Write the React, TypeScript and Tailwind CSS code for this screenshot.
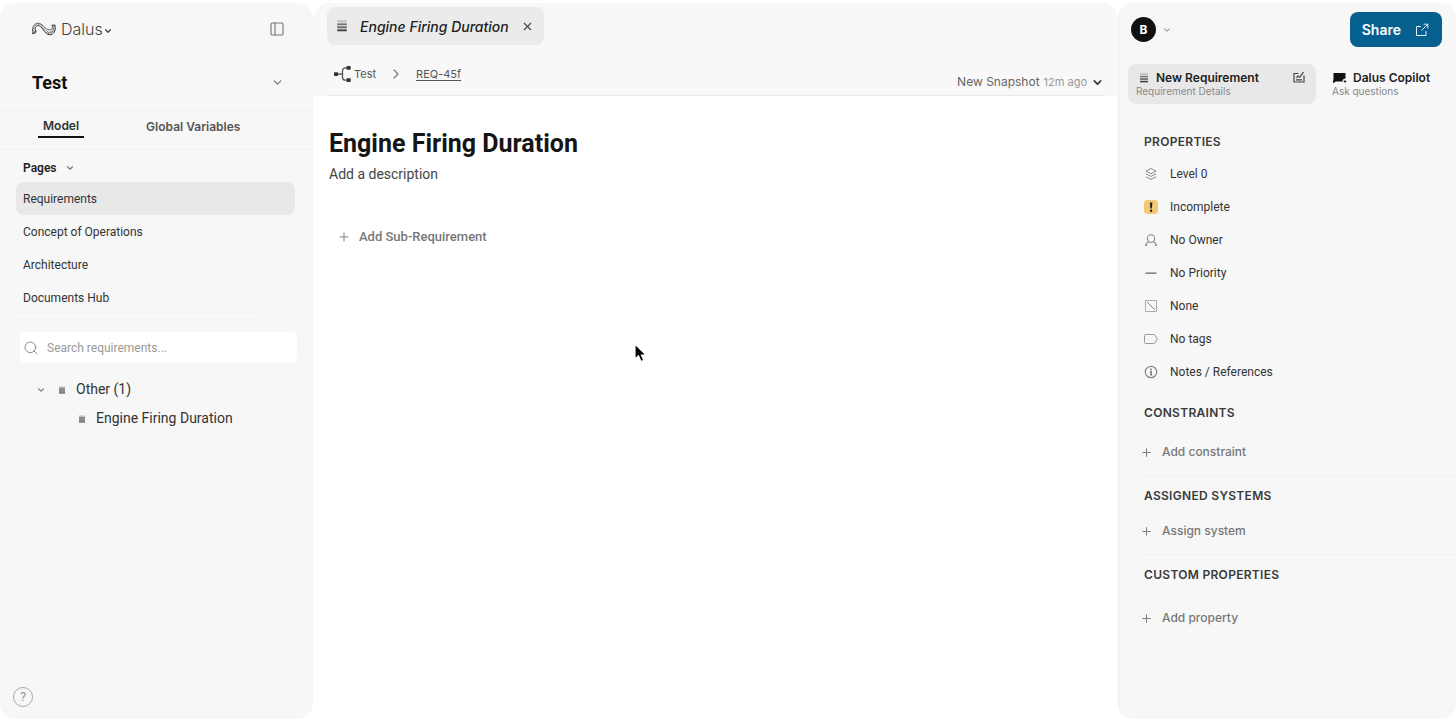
import type { ReactNode } from "react";
import {
  ChevronDown,
  ChevronRight,
  PanelLeft,
  Plus,
  Search,
  X,
} from "lucide-react";

const PAGES = ["Requirements", "Concept of Operations", "Architecture", "Documents Hub"];

function DalusMark() {
  return (
    <svg viewBox="0 0 26 14" className="h-[14px] w-[26px]" fill="none" stroke="#333" strokeLinecap="round">
      <path d="M1.800 11.200C.4 6.500 2.800 1.200 7 1.200c4.700 0 6.800 6.500 11.500 6.700 2.600 .1 3.500-2.300 2.800-4.700" strokeWidth=".8" />
      <path d="M4.800 9.400c-1.400-2.600-.4-5.400 2.400-5.800 3.800-.4 5.600 8.300 11 9.100 4.600 .5 7.200-4.400 5.600-9.500" strokeWidth="1" />
      <path d="M1.800 11.400c1.800 .2 2.800-.6 3-2.200" strokeWidth="1.200" />
      <path d="M3.200 10.200C1.600 6.400 3.200 2.600 7 2.400c4.200-.2 6 7.300 11.300 7.900 3.200 .2 5.200-3 4.300-7.300" strokeWidth="1.600" strokeDasharray=".6 1.100" strokeLinecap="butt" stroke="#555" />
      <path d="M15.500 10.800c3 1.400 6.600-.6 7.700-4.600" strokeWidth="1.800" strokeDasharray=".8 .8" strokeLinecap="butt" stroke="#666" />
      <path d="M21.300 3.200l2.500 0" strokeWidth=".9" />
    </svg>
  );
}

function BarsIcon({ className }: { className: string }) {
  return (
    <svg viewBox="0 0 10 10" className={className} aria-hidden="true">
      <path d="M1 .3h8v1.600H1z" fill="#bbb" />
      <path d="M1 2.800h8v1.600H1z" fill="#777" />
      <path d="M1 5.300h8v1.600H1z" fill="#666" />
      <path d="M1 7.800h8v1.600H1z" fill="#444" />
    </svg>
  );
}

function BlockIcon() {
  return (
    <svg viewBox="0 0 8 8" className="size-2" aria-hidden="true">
      <path d="M1 .5h6v1.500H1z" fill="#bdbdbd" />
      <path d="M1 2h6v5.500H1z" fill="#8c8c8c" />
      <path d="M1 6.500h6v1H1z" fill="#777" />
    </svg>
  );
}

function TreeIcon() {
  return (
    <svg viewBox="0 0 18 18" className="size-[18px]" fill="none" aria-hidden="true">
      <path d="M3 9h5.500M13 2.800h-1.500a3 3 0 0 0-3 3v6.400a3 3 0 0 0 3 3H13" stroke="#555" strokeWidth="1.300" />
      <rect x="0" y="7.200" width="4" height="3.800" rx=".8" fill="#333" />
      <rect x="12.500" y="1" width="4.200" height="3.800" rx=".8" fill="#333" />
      <rect x="12.500" y="13.200" width="4.200" height="3.800" rx=".8" fill="#333" />
    </svg>
  );
}

function ShareIcon() {
  return (
    <svg viewBox="0 0 14 14" className="size-[14px]" fill="none" stroke="#e6f0f5" strokeWidth="1" aria-hidden="true">
      <path d="M6 3.500H1.500v9h9.500V8M8.500 1.200h4.300v4.300M12.500 1.500L6.500 7.500" />
    </svg>
  );
}

function EditIcon() {
  return (
    <svg viewBox="0 0 12 12" className="size-3" fill="none" stroke="#444" strokeWidth="1.200" aria-hidden="true">
      <path d="M5.500 2.500H1V11h10V4.500M3 8.800h6" />
      <path d="M3.500 7l1.200-2 2 1.200L10.500 1.200" />
    </svg>
  );
}

function CopilotIcon() {
  return (
    <svg viewBox="0 0 15 12" className="h-3 w-[15px]" fill="#111" aria-hidden="true">
      <path d="M1.500 1h12v5.500a3 3 0 0 0-3 3H4L.8 11.200 1.500 7z" />
      <path d="M13 7.500c.2 1.200.7 1.700 1.900 1.900-1.200.2-1.700.7-1.900 1.900-.2-1.200-.7-1.700-1.900-1.900 1.200-.2 1.700-.7 1.900-1.900z" />
    </svg>
  );
}

function LevelIcon() {
  return (
    <svg viewBox="0 0 14 14" className="size-[14px]" fill="none" stroke="#888" strokeWidth="1" strokeLinejoin="round" aria-hidden="true">
      <path d="M7 1.500l5 2.600-5 2.600-5-2.600zM2 6.800l5 2.600 5-2.600M2 9.800l5 2.600 5-2.600" />
    </svg>
  );
}

function OwnerIcon() {
  return (
    <svg viewBox="0 0 14 14" className="size-[14px]" fill="none" stroke="#888" strokeWidth="1.100" aria-hidden="true">
      <circle cx="7" cy="5.500" r="3.700" />
      <path d="M1.500 12.400c.6-1.800 1.700-3 3.300-3.700M12.500 12.400c-.6-1.800-1.700-3-3.300-3.700M1 12.400h2M11 12.400h2" />
    </svg>
  );
}

function WarningIcon() {
  return (
    <svg viewBox="0 0 14 14" className="size-[14px]" aria-hidden="true">
      <rect width="14" height="14" rx="3.500" fill="#f3ca72" />
      <path d="M5.800 2.500h2.600L7.800 8.500H6.400z" fill="#222" />
      <circle cx="7.100" cy="10.700" r="1.200" fill="#222" />
    </svg>
  );
}

function PriorityIcon() {
  return (
    <svg viewBox="0 0 14 14" className="size-[14px]" aria-hidden="true">
      <path d="M1.500 6.500h11v1.300h-11z" fill="#666" />
    </svg>
  );
}

function NoneIcon() {
  return (
    <svg viewBox="0 0 14 14" className="size-[14px]" fill="none" stroke="#aaa" strokeWidth="1" aria-hidden="true">
      <path d="M1.500 1.500h11v11h-11z" />
      <path d="M3 3l8 8" stroke="#888" />
    </svg>
  );
}

function TagIcon() {
  return (
    <svg viewBox="0 0 14 14" className="size-[14px]" fill="none" stroke="#999" strokeWidth="1" strokeLinejoin="round" aria-hidden="true">
      <path d="M1.500 2.500h8.200c.6 0 1 .2 1.300.6L13.300 7 11 10.900c-.3.4-.7.6-1.300.6H1.500c-.5 0-1-.4-1-1v-7c0-.6.500-1 1-1z" />
    </svg>
  );
}

function NotesIcon() {
  return (
    <svg viewBox="0 0 14 14" className="size-[14px]" fill="none" stroke="#888" strokeWidth="1.200" aria-hidden="true">
      <circle cx="7" cy="7" r="5.700" />
      <path d="M6 6.300h1v3.500h1.200M7 3.500v1.400" stroke="#666" strokeWidth="1.300" />
    </svg>
  );
}

const PROPERTIES: { label: string; icon: ReactNode }[] = [
  { label: "Level 0", icon: <LevelIcon /> },
  { label: "Incomplete", icon: <WarningIcon /> },
  { label: "No Owner", icon: <OwnerIcon /> },
  { label: "No Priority", icon: <PriorityIcon /> },
  { label: "None", icon: <NoneIcon /> },
  { label: "No tags", icon: <TagIcon /> },
  { label: "Notes / References", icon: <NotesIcon /> },
];

function SectionTitle({ children }: { children: ReactNode }) {
  return (
    <h2 className="pl-[25px] font-[Inter,sans-serif] text-[12px] leading-4 font-semibold tracking-wide text-[#3a3a3a]">
      {children}
    </h2>
  );
}

function AddButton({ children }: { children: ReactNode }) {
  return (
    <button className="ml-[21px] flex h-5 items-center gap-[9px] font-[Inter,sans-serif] text-[12px] font-medium text-[#777]">
      <Plus size={13} strokeWidth={1.8} />
      {children}
    </button>
  );
}

function Sidebar() {
  return (
    <aside className="flex w-[313px] shrink-0 flex-col rounded-2xl bg-[#f7f7f7]">
      <div className="flex h-[52px] items-center justify-between pr-[28px] pl-[31px]">
        <button className="flex items-center gap-1 font-[Inter,sans-serif] text-[16px] font-light text-[#444]">
          <DalusMark />
          <span className="flex items-center">
            Dalus
            <ChevronDown size={10} strokeWidth={3} className="mt-1" />
          </span>
        </button>
        <button aria-label="Toggle sidebar">
          <PanelLeft size={16} strokeWidth={1.7} color="#777" />
        </button>
      </div>
      <button className="flex h-[55px] items-center justify-between pr-[29px] pl-8 text-[18px] font-bold text-[#111]">
        Test
        <ChevronDown size={13} strokeWidth={2.2} color="#777" />
      </button>
      <nav className="flex h-[40px] items-start border-y border-[#f1f1f1] pt-[7px] font-[Inter,sans-serif] text-[12px] font-semibold">
        <a href="#model" className="ml-[38px] border-b-2 border-[#111] px-[5px] pb-[2px] leading-4 text-[#333]">
          Model
        </a>
        <a href="#variables" className="ml-[62px] leading-[18px] text-[#555]">
          Global Variables
        </a>
      </nav>
      <button className="mt-2 flex h-5 items-center gap-2 pl-[23px] text-[12px] font-semibold text-[#222]">
        Pages
        <ChevronDown size={10} strokeWidth={2.6} color="#777" />
      </button>
      <ul className="mt-1 mr-[18px] ml-4 text-[12px] text-[#333]">
        {PAGES.map((page, i) => (
          <li key={page}>
            <a
              href="#page"
              className={`flex h-[33px] items-center rounded-lg pl-[7px] ${i === 0 ? "bg-[#e8e8e8]" : ""}`}
            >
              {page}
            </a>
          </li>
        ))}
      </ul>
      <div className="mt-px mr-14 ml-3 h-px bg-white" />
      <label className="mt-4 mr-4 ml-5 flex h-[31px] items-center gap-2 rounded-md bg-white pl-[3px]">
        <Search size={16} strokeWidth={1.5} color="#888" />
        <input
          type="text"
          aria-label="Search requirements"
          placeholder="Search requirements..."
          className="min-w-0 flex-1 bg-transparent text-[12px] outline-none placeholder:text-[#999]"
        />
      </label>
      <div className="mt-3 text-[14px] text-[#333]">
        <button className="flex h-[29px] items-center pl-9">
          <ChevronDown size={10} strokeWidth={2.8} color="#888" />
          <span className="mr-[10px] ml-3">
            <BlockIcon />
          </span>
          Other (1)
        </button>
        <button className="flex h-[29px] items-center gap-[10px] pl-[78px]">
          <BlockIcon />
          Engine Firing Duration
        </button>
      </div>
      <button
        aria-label="Help"
        className="mt-auto mb-3 ml-[13px] flex size-5 items-center justify-center rounded-full border border-[#aaa] text-[13px] text-[#999]"
      >
        ?
      </button>
    </aside>
  );
}

function Editor() {
  return (
    <main className="flex min-w-0 flex-1 flex-col">
      <header className="flex h-[93px] flex-col rounded-t-2xl bg-[#f8f8f8] px-[14px]">
        <div className="mt-1 flex h-[38px] items-center self-start rounded-lg bg-[#ebebeb] pr-[10px] pl-[9px]">
          <BarsIcon className="size-3" />
          <span className="mr-3 ml-3 font-[Inter,sans-serif] text-[14px] font-medium text-[#222] italic">
            Engine Firing Duration
          </span>
          <button aria-label="Close tab">
            <X size={13} strokeWidth={2} color="#444" />
          </button>
        </div>
        <div className="flex flex-1 items-start justify-between border-b border-[#e9e9e9]">
          <nav className="mt-5 ml-[7px] flex h-[18px] items-center font-[Inter,sans-serif] text-[11px] text-[#555]">
            <TreeIcon />
            <a href="#test" className="mr-3 ml-[2px]">
              Test
            </a>
            <ChevronRight size={16} strokeWidth={1.8} color="#777" />
            <a href="#req" className="ml-3 underline underline-offset-2">
              REQ-45f
            </a>
          </nav>
          <button className="mt-[27px] flex h-5 items-center gap-1 font-[Inter,sans-serif] text-[12px] text-[#666]">
            New Snapshot
            <span className="text-[11px] text-[#999]">12m ago</span>
            <ChevronDown size={13} strokeWidth={3} color="#333" />
          </button>
        </div>
      </header>
      <section className="px-4 pt-8">
        <h1 className="text-[25px] leading-8 font-bold text-[#151515]">Engine Firing Duration</h1>
        <p className="mt-1 text-[14px] leading-5 text-[#444]">Add a description</p>
        <button className="mt-[43px] ml-2 flex h-5 items-center gap-2 text-[13px] font-medium text-[#777]">
          <Plus size={14} strokeWidth={1.6} />
          Add Sub-Requirement
        </button>
      </section>
    </main>
  );
}

function Details() {
  return (
    <aside className="w-[338px] shrink-0 rounded-2xl border-l border-[#efefef] bg-[#f7f7f7] font-[Inter,sans-serif]">
      <div className="flex h-[53px] items-center justify-between pr-[14px] pl-3">
        <button className="flex items-center gap-[6px]">
          <span className="flex size-[25px] items-center justify-center rounded-full bg-[#111] text-[12px] font-bold text-white">
            B
          </span>
          <ChevronDown size={10} strokeWidth={2.4} color="#777" />
        </button>
        <button className="flex h-[35px] items-center gap-[14px] rounded-lg bg-[#05608f] pr-[13px] pl-3 text-[14px] font-semibold text-white">
          Share
          <ShareIcon />
        </button>
      </div>
      <div className="mt-2 flex pl-[9px] text-left">
        <button className="flex h-10 w-[188px] items-start justify-between rounded-lg bg-[#e8e8e8] px-2 pt-[5px]">
          <span className="text-left">
            <span className="flex items-center gap-[7px] pl-[3px] text-[12px] leading-[17px] font-semibold text-[#222]">
              <BarsIcon className="size-[10px]" />
              New Requirement
            </span>
            <span className="block text-[10px] leading-[10px] text-[#888]">Requirement Details</span>
          </span>
          <span className="mt-[2px] mr-[3px]">
            <EditIcon />
          </span>
        </button>
        <button className="ml-4 flex flex-col items-start pt-[5px]">
          <span className="flex items-center gap-[6px] text-[12px] leading-[17px] font-semibold text-[#222]">
            <CopilotIcon />
            Dalus Copilot
          </span>
          <span className="text-[10px] leading-[10px] text-[#888]">Ask questions</span>
        </button>
      </div>
      <div className="mt-[30px]">
        <SectionTitle>PROPERTIES</SectionTitle>
        <ul className="mt-[7px] font-[Roboto,sans-serif] text-[12px] text-[#333]">
          {PROPERTIES.map(({ label, icon }) => (
            <li key={label}>
              <button className="flex h-[33px] items-center gap-3 pl-[25px]">
                {icon}
                {label}
              </button>
            </li>
          ))}
        </ul>
      </div>
      <div className="mt-[17px]">
        <SectionTitle>CONSTRAINTS</SectionTitle>
        <div className="mt-[21px]">
          <AddButton>Add constraint</AddButton>
        </div>
      </div>
      <div className="mt-[13px] ml-[22px] border-t border-[#f1f1f1]" />
      <div className="mt-3">
        <SectionTitle>ASSIGNED SYSTEMS</SectionTitle>
        <div className="mt-[17px]">
          <AddButton>Assign system</AddButton>
        </div>
      </div>
      <div className="mt-[13px] ml-[22px] border-t border-[#f1f1f1]" />
      <div className="mt-3">
        <SectionTitle>CUSTOM PROPERTIES</SectionTitle>
        <div className="mt-[25px]">
          <AddButton>Add property</AddButton>
        </div>
      </div>
    </aside>
  );
}

export default function App() {
  return (
    <div className="relative flex min-h-screen bg-white pt-[3px] pb-px font-[Roboto,sans-serif]">
      <Sidebar />
      <Editor />
      <Details />
      <svg viewBox="0 0 14 20" className="absolute top-[343px] left-[634px] h-5 w-[14px]" aria-hidden="true">
        <path d="M1 1v15l3.500-3.200L7 18.500l2.800-1.200L7.400 12H12z" fill="#000" stroke="#fff" strokeWidth="1.200" />
      </svg>
    </div>
  );
}
